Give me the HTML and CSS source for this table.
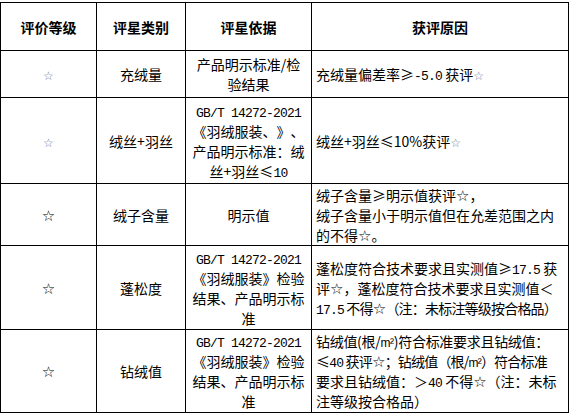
FILE: index.html
```html
<!DOCTYPE html>
<html lang="zh-CN">
<head>
<meta charset="utf-8">
<link rel="stylesheet" href="styles.css">
</head>
<body>
<table class="grid">
  <colgroup>
    <col class="c1"><col class="c2"><col class="c3"><col class="c4">
  </colgroup>
  <tr class="r0">
    <th>评价等级</th><th>评星类别</th><th>评星依据</th><th>获评原因</th>
  </tr>
  <tr class="r1">
    <td class="mid"><span class="star-sm">☆</span></td>
    <td class="mid">充绒量</td>
    <td class="mid">产品明示标准/检<br>验结果</td>
    <td class="reason">充绒量偏差率≥<span class="num">-5.0</span> 获评<span class="star-sm">☆</span></td>
  </tr>
  <tr class="r2">
    <td class="mid"><span class="star-sm">☆</span></td>
    <td class="mid">绒丝+羽丝</td>
    <td class="mid"><span class="num">GB/T 14272-2021</span><br>《羽绒服装、》、<br>产品明示标准：绒<br>丝+羽丝≤<span class="num">10</span></td>
    <td class="reason">绒丝+羽丝≤10%获评<span class="star-sm">☆</span></td>
  </tr>
  <tr class="r3">
    <td class="mid"><span class="star">☆</span></td>
    <td class="mid">绒子含量</td>
    <td class="mid">明示值</td>
    <td class="reason">绒子含量≥明示值获评<span class="star">☆</span>，<br>绒子含量小于明示值但在允差范围之内<br>的不得<span class="star">☆</span>。</td>
  </tr>
  <tr class="r4">
    <td class="mid"><span class="star">☆</span></td>
    <td class="mid">蓬松度</td>
    <td class="mid"><span class="num">GB/T 14272-2021</span><br>《羽绒服装》检验<br>结果、产品明示标<br>准</td>
    <td class="reason">蓬松度符合技术要求且实测值≥<span class="num">17.5</span> 获<br>评<span class="star">☆</span>，蓬松度符合技术要求且实测值＜<br><span class="tight"><span class="num">17.5</span> 不得<span class="star">☆</span>（注：未标注等级按合格品）</span></td>
  </tr>
  <tr class="r5">
    <td class="mid"><span class="star">☆</span></td>
    <td class="mid">钻绒值</td>
    <td class="mid"><span class="num">GB/T 14272-2021</span><br>《羽绒服装》检验<br>结果、产品明示标<br>准</td>
    <td class="reason"><span class="semi">钻绒值(根/<span class="unit">m²</span>)符合标准要求且钻绒值：</span><br><span class="tight">≤<span class="num">40</span> 获评<span class="star">☆</span>；钻绒值（根/<span class="unit">m²</span>）符合标准</span><br>要求且钻绒值：＞<span class="num">40</span> 不得<span class="star">☆</span>（注：未标<br>注等级按合格品）</td>
  </tr>
</table>
</body>
</html>
```

FILE: styles.css
```css
html, body {
  margin: 0;
  padding: 0;
  background: #ffffff;
}

body {
  padding-top: 2px;
  font-family: "Noto Sans CJK SC", "Noto Sans", sans-serif;
  font-size: 14px;
  color: #000000;
  text-spacing-trim: space-all;
}

.grid {
  border-collapse: collapse;
  table-layout: fixed;
  width: 568px;
}

.c1 { width: 96px; }
.c2 { width: 89px; }
.c3 { width: 126px; }
.c4 { width: 257px; }

.grid th,
.grid td {
  border: 1px solid #000000;
  padding: 0 4px;
  vertical-align: middle;
  line-height: 20px;
  font-weight: 400;
  white-space: nowrap;
  overflow: hidden;
}

.grid th {
  font-weight: 700;
  text-align: center;
}

.mid {
  text-align: center;
}

.reason {
  text-align: left;
  padding-left: 7px;
}

.r0 { height: 48px; }
.r1 { height: 47px; }
.r2 { height: 86px; }
.r3 { height: 62px; }
.r4 { height: 84px; }
.r5 { height: 83px; }

.num {
  font-family: "Liberation Mono", "DejaVu Sans Mono", monospace;
  font-size: 13px;
  letter-spacing: -0.8px;
  line-height: 1;
}

.unit {
  font-family: "Liberation Sans", sans-serif;
  font-size: 12px;
  line-height: 1;
}

.tight {
  letter-spacing: -0.8px;
}

.semi {
  letter-spacing: -0.3px;
}

.star-sm {
  font-family: "DejaVu Sans", sans-serif;
  font-size: 12px;
  line-height: 1;
  color: #6f7fa6;
}

.star {
  font-family: "DejaVu Sans", sans-serif;
  font-size: 15px;
  line-height: 1;
}
```
